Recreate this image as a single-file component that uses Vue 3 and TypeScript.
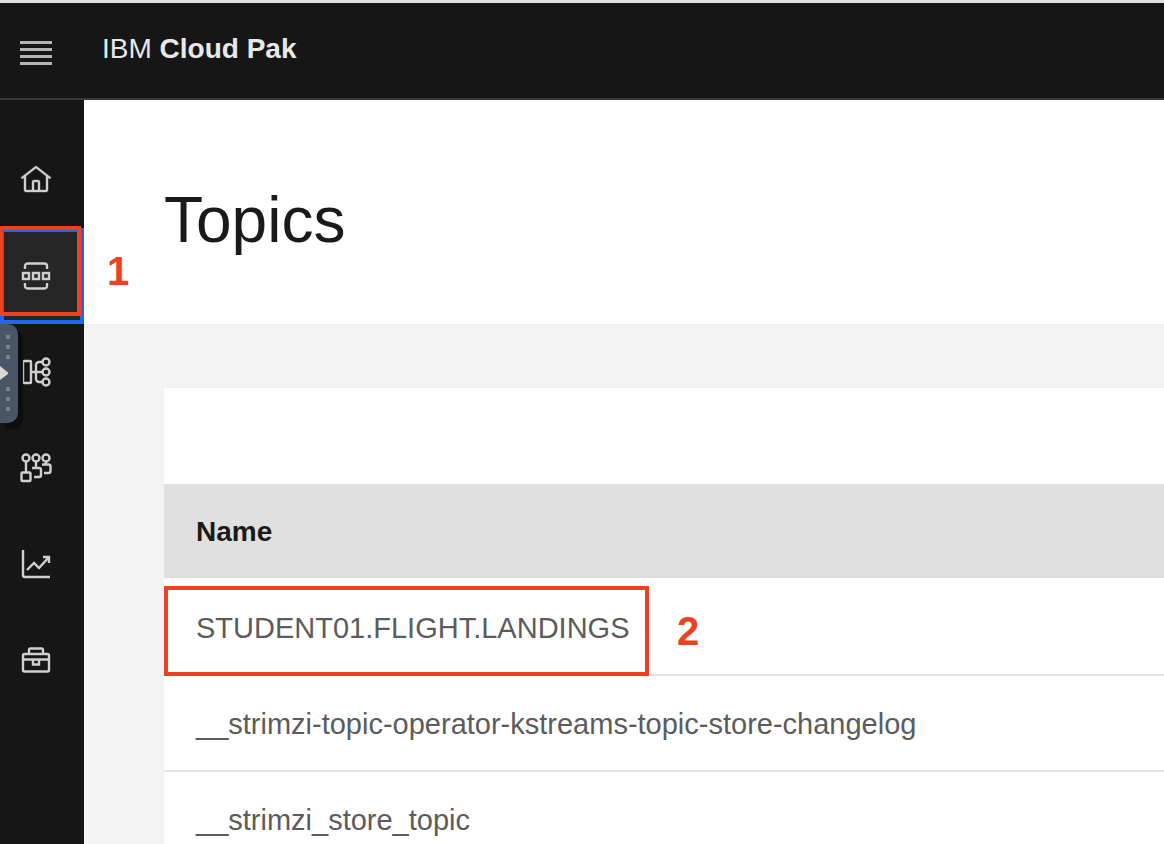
<script setup lang="ts">
interface NavItem {
  label: string
  icon: string
  active?: boolean
}

const navItems: NavItem[] = [
  { label: 'Home', icon: 'home' },
  { label: 'Topics', icon: 'topics', active: true },
  { label: 'Schema registry', icon: 'schema' },
  { label: 'Consumer groups', icon: 'groups' },
  { label: 'Monitoring', icon: 'chart' },
  { label: 'Toolbox', icon: 'toolbox' },
]

const topics: string[] = [
  'STUDENT01.FLIGHT.LANDINGS',
  '__strimzi-topic-operator-kstreams-topic-store-changelog',
  '__strimzi_store_topic',
]
</script>

<template>
  <div class="app">
    <header class="topbar">
      <button class="menu" type="button" aria-label="Open menu">
        <span class="bar"></span>
        <span class="bar"></span>
        <span class="bar"></span>
        <span class="bar"></span>
      </button>
      <a class="brand" href="#">IBM <b>Cloud Pak</b></a>
    </header>

    <div class="body">
      <nav class="sidebar" aria-label="Main">
        <a
          v-for="item in navItems"
          :key="item.icon"
          href="#"
          class="nav-item"
          :class="{ active: item.active }"
          :aria-label="item.label"
        >
          <svg class="icon" viewBox="0 0 32 32" aria-hidden="true">
            <path
              v-if="item.icon === 'home'"
              class="solid"
              d="M16.6 2.2a1 1 0 0 0-1.2 0L1 13.4 2.2 15 4 13.6V26a2 2 0 0 0 2 2h20a2 2 0 0 0 2-2V13.6L29.8 15 31 13.4ZM18 26h-4v-8h4Zm2 0v-8a2 2 0 0 0-2-2h-4a2 2 0 0 0-2 2v8H6V12L16 4.3l10 7.8V26Z"
            />
            <g v-else-if="item.icon === 'topics'">
              <path d="M5 9V6a2.500 2.500 0 0 1 2.500-2.500h17A2.500 2.500 0 0 1 27 6v3M5 23v3a2.500 2.500 0 0 0 2.500 2.500h17A2.500 2.500 0 0 0 27 26v-3" />
              <rect x="3" y="13" width="6" height="6" />
              <rect x="13" y="13" width="6" height="6" />
              <rect x="23" y="13" width="6" height="6" />
            </g>
            <g v-else-if="item.icon === 'schema'">
              <rect x="3" y="5" width="8" height="22" rx="1" />
              <path d="M11 16h11M22 6h-3a3 3 0 0 0-3 3v14a3 3 0 0 0 3 3h3" />
              <circle cx="26" cy="6" r="3.500" />
              <circle cx="26" cy="16" r="3.500" />
              <circle cx="26" cy="26" r="3.500" />
            </g>
            <g v-else-if="item.icon === 'groups'">
              <circle cx="6" cy="6" r="3.500" />
              <circle cx="16" cy="6" r="3.500" />
              <circle cx="26" cy="6" r="3.500" />
              <rect x="1.500" y="20.500" width="9" height="8.500" rx="1" />
              <path d="M6 9.500v11M16 9.500V16M12 16h7a2 2 0 0 1 2 2v5a2 2 0 0 1-2 2h-5M26 9.500v3M22 12.500h6.500a2 2 0 0 1 2 2v4.500a2 2 0 0 1-2 2H24" />
            </g>
            <g v-else-if="item.icon === 'chart'">
              <path d="M3 2v25a2 2 0 0 0 2 2h25" />
              <path d="M7 22l7-7 5 5L29 9M23 9h6v6" />
            </g>
            <g v-else>
              <path d="M9 9V6a1.500 1.500 0 0 1 1.500-1.500h11A1.500 1.500 0 0 1 23 6v3" />
              <rect x="3" y="10" width="26" height="17.500" rx="1.500" />
              <path d="M3 15.500h26M13 15.500v5h6v-5" />
            </g>
          </svg>
          <template v-if="item.active">
            <span class="mark mark-nav"></span>
            <span class="step step-nav">1</span>
          </template>
        </a>
        <button class="drawer" type="button" aria-label="Open drawer">
          <svg class="drawer-art" viewBox="0 0 18 100" aria-hidden="true">
            <path class="dot" d="M6 11h4v4H6zM6 21h4v4H6zM6 31h4v4H6zM6 63h4v4H6zM6 73h4v4H6zM6 83h4v4H6z" />
            <path class="arrow" d="M0 42l8 6.500v1.500l-8 6z" />
          </svg>
        </button>
      </nav>

      <main class="main">
        <div class="page-head">
          <h1>Topics</h1>
        </div>
        <section class="content">
          <div class="toolbar"></div>
          <table class="topics">
            <thead>
              <tr>
                <th scope="col">Name</th>
              </tr>
            </thead>
            <tbody>
              <tr v-for="(topic, index) in topics" :key="topic">
                <td>
                  <a class="topic" href="#">{{ topic }}</a>
                  <template v-if="index === 0">
                    <span class="mark mark-row"></span>
                    <span class="step step-row">2</span>
                  </template>
                </td>
              </tr>
            </tbody>
          </table>
        </section>
      </main>
    </div>
  </div>
</template>

<style>
body {
  margin: 0;
}
</style>

<style scoped>
.app {
  display: flex;
  flex-direction: column;
  height: 100vh;
  overflow: hidden;
  background: #f3f3f3;
  color: #1a1a1a;
  font-family: 'Liberation Sans', Arial, sans-serif;
  font-size: 28px;
  line-height: 36px;
}

.app *,
.app {
  box-sizing: border-box;
}

.topbar {
  flex: none;
  display: flex;
  align-items: center;
  gap: 50px;
  height: 100px;
  padding-left: 20px;
  border-top: 3px solid #dfe1df;
  border-bottom: 2px solid #393939;
  background: #161616;
}

.menu {
  display: flex;
  flex-direction: column;
  gap: 4px;
  width: 32px;
  margin-top: 4px;
  padding: 0;
  border: 0;
  background: none;
}

.bar {
  height: 3px;
  background: #b4b4b4;
}

.brand {
  padding-bottom: 4px;
  color: #e8e8e8;
  text-decoration: none;
}

.body {
  flex: 1;
  display: flex;
  min-height: 0;
}

.sidebar {
  position: relative;
  z-index: 1;
  flex: none;
  width: 84px;
  padding-top: 32px;
  background: #161616;
}

.nav-item {
  position: relative;
  display: flex;
  align-items: center;
  height: 96px;
  padding-left: 20px;
}

.nav-item.active {
  background: #262626;
  box-shadow: inset 0 0 0 4px #2364f0;
}

.icon {
  width: 32px;
  height: 32px;
  fill: none;
  stroke: #d0d0d0;
  stroke-width: 2.4;
}

.icon .solid {
  fill: #d0d0d0;
  stroke-width: 0.4;
}

.mark {
  position: absolute;
  border: 4px solid #ee4023;
}

.mark-nav {
  top: -2px;
  left: 0;
  width: 81px;
  height: 90px;
  border-left-width: 3px;
}

.step {
  position: absolute;
  color: #ee4023;
  font-size: 40px;
  font-weight: 700;
  line-height: 44px;
}

.step-nav {
  top: 21px;
  left: 107px;
}

.drawer {
  position: absolute;
  top: 224px;
  left: 0;
  width: 18px;
  height: 99px;
  padding: 0;
  border: 0;
  border-radius: 0 10px 10px 0;
  background: #4a5666;
  box-shadow: 5px 6px 1px #0d0d0d;
}

.drawer-art {
  display: block;
  width: 18px;
  height: 100px;
}

.dot {
  fill: #7d8084;
}

.arrow {
  fill: #d8d8d8;
}

.main {
  flex: 1;
  min-width: 0;
}

.page-head {
  height: 224px;
  padding: 80px 80px 0;
  background: #fff;
}

h1 {
  margin: 0;
  font-size: 64px;
  font-weight: 400;
  line-height: 80px;
}

.content {
  padding: 64px 0 0 80px;
}

.toolbar {
  height: 96px;
  background: #fff;
}

.topics {
  width: 100%;
  border-collapse: separate;
  border-spacing: 0;
  background: #fff;
}

th,
td {
  position: relative;
  height: 96px;
  padding: 2px 32px 0;
  border-bottom: 2px solid #e4e4e4;
  text-align: left;
}

th {
  border-bottom-color: #fff;
  background: #e0e0e0;
  background-clip: padding-box;
}

.topic {
  color: #5c5c5c;
  font-size: 29px;
  text-decoration: none;
}

.mark-row {
  top: 6px;
  left: 0;
  width: 485px;
  height: 90px;
}

.step-row {
  top: 29px;
  left: 513px;
}
</style>
